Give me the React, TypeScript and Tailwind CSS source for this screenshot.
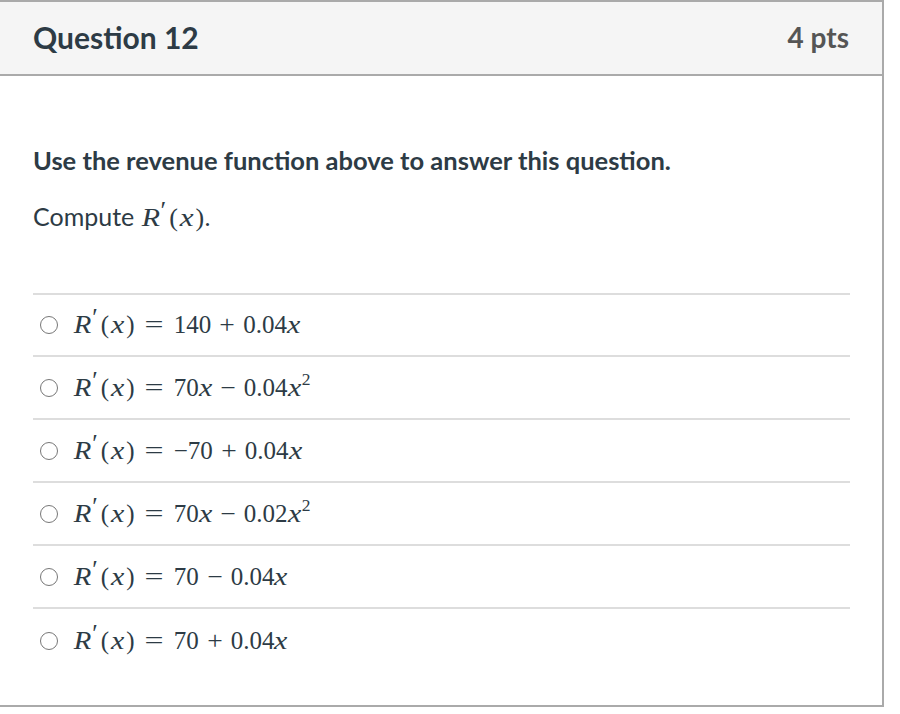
import React from 'react';

const lato = { fontFamily: 'Lato, "Noto Sans", sans-serif' };
const serif = { fontFamily: '"Liberation Serif", "DejaVu Serif", serif' };

function V({ children }: { children: React.ReactNode }) {
  return <span className="italic">{children}</span>;
}

function Eq() {
  return <span className="mx-[0.5em] inline-block scale-x-[1.35]">=</span>;
}

function Op({ children }: { children: React.ReactNode }) {
  return <span className="mx-[0.36em] inline-block scale-x-[1.1]">{children}</span>;
}

function Rp() {
  return (
    <>
      <V>
        <span className="inline-block scale-x-[1.15] mr-[1px]">R</span>
      </V>
      <span className="relative -top-[0.28em] text-[1em] ml-[1px] mr-[3px]">′</span>
      <span>(</span>
      <V>
        <span className="inline-block scale-x-[1.2] mx-[3px]">x</span>
      </V>
      <span>)</span>
    </>
  );
}

function X() {
  return (
    <V>
      <span className="inline-block scale-x-[1.2] mx-[1px]">x</span>
    </V>
  );
}

function Sq() {
  return <sup className="text-[0.7em] -top-[0.6em] ml-[1px]">2</sup>;
}

const answers: React.ReactNode[] = [
  <>
    <Rp />
    <Eq />140<Op>+</Op>0.04<X />
  </>,
  <>
    <Rp />
    <Eq />70<X />
    <Op>−</Op>0.04<X />
    <Sq />
  </>,
  <>
    <Rp />
    <Eq />−70<Op>+</Op>0.04<X />
  </>,
  <>
    <Rp />
    <Eq />70<X />
    <Op>−</Op>0.02<X />
    <Sq />
  </>,
  <>
    <Rp />
    <Eq />70<Op>−</Op>0.04<X />
  </>,
  <>
    <Rp />
    <Eq />70<Op>+</Op>0.04<X />
  </>,
];

export default function App() {
  return (
    <div className="bg-white w-[900px] h-[714px]" style={lato}>
      <div className="w-[884px] h-[707px] border-t-2 border-r-2 border-b-2 border-[#aaaaaa] flex flex-col">
        <div className="h-[74px] bg-[#f5f5f5] border-b-2 border-[#aaaaaa] flex items-center justify-between pl-[33px] pr-[33px] pb-[2px] shrink-0">
          <h2 className="text-[30px] font-bold text-[#2d3b45] leading-none">Question 12</h2>
          <span className="text-[28px] font-bold text-[#555555] leading-none">4 pts</span>
        </div>
        <div className="pl-[33px] pr-[32px] pt-[69px] text-[#2d3b45]">
          <p className="text-[25.5px] font-bold leading-[30px]">Use the revenue function above to answer this question.</p>
          <p className="text-[25px] leading-[30px] mt-[26px] whitespace-nowrap">
            Compute{' '}
            <span className="text-[26px] ml-[2px]" style={serif}>
              <Rp />.
            </span>
          </p>
          <div className="mt-[60px] border-t-2 border-[#dddddd]">
            {answers.map((a, i) => (
              <div
                key={i}
                className={`${i === 0 ? 'h-[62px]' : 'h-[63px]'} flex items-center ${
                  i < answers.length - 1 ? 'border-b-2 border-[#dddddd]' : ''
                }`}
              >
                <span className="ml-[7px] w-[18px] h-[18px] rounded-full border-[1.5px] border-[#777777] bg-white shrink-0" />
                <span className="ml-[17px] text-[25px] leading-[30px] text-[#2d3b45] whitespace-nowrap" style={serif}>
                  {a}
                </span>
              </div>
            ))}
          </div>
        </div>
      </div>
    </div>
  );
}
